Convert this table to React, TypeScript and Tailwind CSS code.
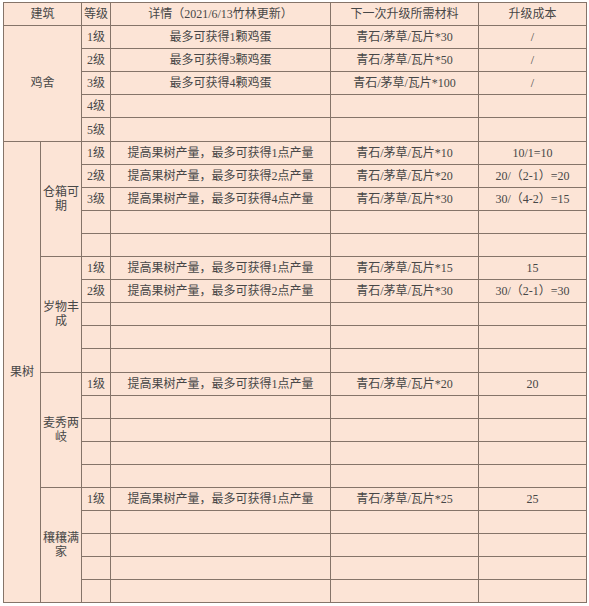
import React from "react";

type Row = { level?: string; detail?: string; material?: string; cost?: string };

const coop: Row[] = [
  { level: "1级", detail: "最多可获得1颗鸡蛋", material: "青石/茅草/瓦片*30", cost: "/" },
  { level: "2级", detail: "最多可获得3颗鸡蛋", material: "青石/茅草/瓦片*50", cost: "/" },
  { level: "3级", detail: "最多可获得4颗鸡蛋", material: "青石/茅草/瓦片*100", cost: "/" },
  { level: "4级" },
  { level: "5级" },
];

const tip = (n: number) => `提高果树产量，最多可获得${n}点产量`;

const trees: { name: string; lines: string[]; rows: Row[] }[] = [
  {
    name: "仓箱可期",
    lines: ["仓箱可", "期"],
    rows: [
      { level: "1级", detail: tip(1), material: "青石/茅草/瓦片*10", cost: "10/1=10" },
      { level: "2级", detail: tip(2), material: "青石/茅草/瓦片*20", cost: "20/（2-1）=20" },
      { level: "3级", detail: tip(4), material: "青石/茅草/瓦片*30", cost: "30/（4-2）=15" },
      {},
      {},
    ],
  },
  {
    name: "岁物丰成",
    lines: ["岁物丰", "成"],
    rows: [
      { level: "1级", detail: tip(1), material: "青石/茅草/瓦片*15", cost: "15" },
      { level: "2级", detail: tip(2), material: "青石/茅草/瓦片*30", cost: "30/（2-1）=30" },
      {},
      {},
      {},
    ],
  },
  {
    name: "麦秀两岐",
    lines: ["麦秀两", "岐"],
    rows: [{ level: "1级", detail: tip(1), material: "青石/茅草/瓦片*20", cost: "20" }, {}, {}, {}, {}],
  },
  {
    name: "穰穰满家",
    lines: ["穰穰满", "家"],
    rows: [{ level: "1级", detail: tip(1), material: "青石/茅草/瓦片*25", cost: "25" }, {}, {}, {}, {}],
  },
];

const td = "border border-[#857469] text-center align-middle p-0 whitespace-nowrap";

function Cells({ row }: { row: Row }) {
  return (
    <>
      <td className={td}>{row.level}</td>
      <td className={td}>{row.detail}</td>
      <td className={td}>{row.material}</td>
      <td className={td}>{row.cost}</td>
    </>
  );
}

export default function App() {
  return (
    <div className="min-h-screen bg-white pt-[2px] pl-[3px]">
      <table
        className="table-fixed border-collapse bg-[#fce4d6] text-[12px] leading-[14px] text-[#474747]"
        style={{ fontFamily: '"Liberation Serif", "Noto Sans CJK SC", serif' }}
      >
        <colgroup>
          <col className="w-[37px]" />
          <col className="w-[41px]" />
          <col className="w-[29px]" />
          <col className="w-[220px]" />
          <col className="w-[148px]" />
          <col className="w-[108px]" />
        </colgroup>
        <tbody>
          <tr className="h-[23.1px]">
            <td className={td} colSpan={2}>建筑</td>
            <td className={td}>等级</td>
            <td className={td}>详情（2021/6/13竹林更新）</td>
            <td className={td}>下一次升级所需材料</td>
            <td className={td}>升级成本</td>
          </tr>
          {coop.map((row, i) => (
            <tr key={`c${i}`} className="h-[23.1px]">
              {i === 0 && (
                <td className={td} colSpan={2} rowSpan={5}>
                  鸡舍
                </td>
              )}
              <Cells row={row} />
            </tr>
          ))}
          {trees.map((group, g) =>
            group.rows.map((row, i) => (
              <tr key={`${group.name}${i}`} className="h-[23.1px]">
                {g === 0 && i === 0 && (
                  <td className={td} rowSpan={20}>
                    果树
                  </td>
                )}
                {i === 0 && (
                  <td className={td} rowSpan={5}>
                    {group.lines.map((l) => (
                      <div key={l}>{l}</div>
                    ))}
                  </td>
                )}
                <Cells row={row} />
              </tr>
            ))
          )}
        </tbody>
      </table>
    </div>
  );
}
